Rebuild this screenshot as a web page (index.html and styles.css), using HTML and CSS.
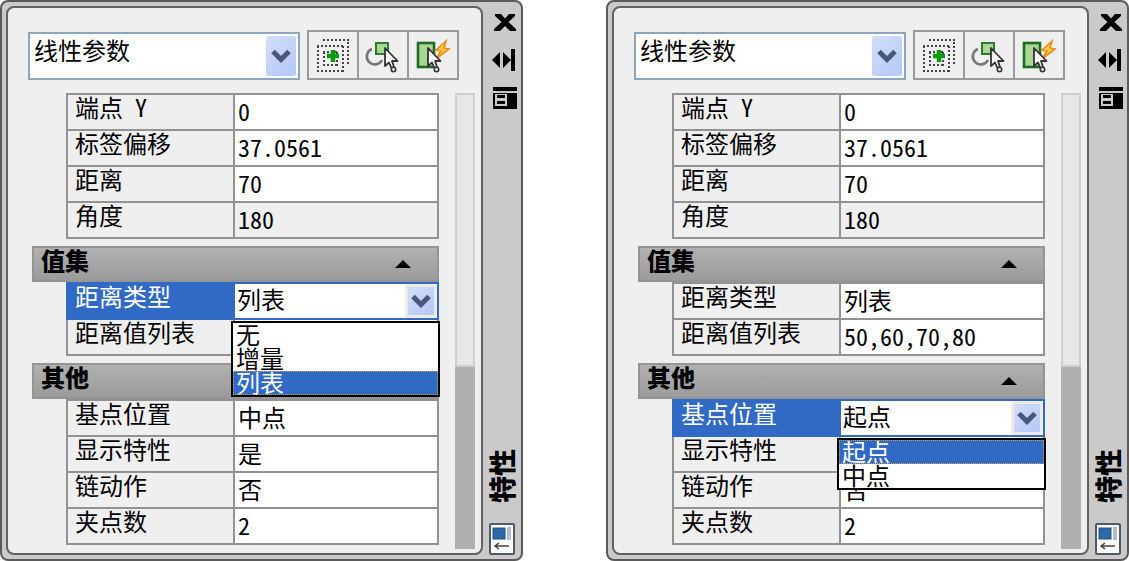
FILE: index.html
```
<!DOCTYPE html>
<html lang="zh-CN">
<head>
    <meta charset="UTF-8">
    <meta name="viewport" content="width=device-width, initial-scale=1.0">
    <title>特性</title>
    <link rel="stylesheet" href="styles.css">
</head>
<body>
    <!-- 共用图标 -->
    <svg class="sprite" aria-hidden="true">
        <symbol id="i-chevron" viewBox="0 0 20 14">
            <path d="M2 2.500l8 8 8-8" fill="none" stroke="#47587c" stroke-width="5"/>
        </symbol>
        <symbol id="i-pickadd" viewBox="0 0 40 40">
            <path d="M10 5H36M35 7V31M4 11H31M4 36H31M5 11V37M30 11V37M10 17H25M10 30H25M11 17V31M24 17V31" fill="none" stroke="#444" stroke-width="2" stroke-dasharray="2 2"/>
            <path d="M14 21H26M20 15V27" stroke="#0c9a14" stroke-width="4.500"/>
        </symbol>
        <symbol id="i-cursor" viewBox="0 0 15 26">
            <path d="M1 1V19L5 15.500L7.500 21L10 20L8 14H13.500Z" fill="#fff" stroke="#333" stroke-width="1.800" stroke-linejoin="round"/>
            <circle cx="9.500" cy="22.500" r="2.200" fill="#fff" stroke="#333" stroke-width="1.600"/>
        </symbol>
        <symbol id="i-select" viewBox="0 0 40 40">
            <path d="M9 14A8 8 0 1 0 19 25" fill="none" stroke="#777" stroke-width="2.600"/>
            <rect x="13" y="8" width="12" height="11" fill="#a9d794" stroke="#2f7a31" stroke-width="2"/>
            <use href="#i-cursor" x="21" y="12" width="15" height="26"/>
        </symbol>
        <symbol id="i-quick" viewBox="0 0 40 40">
            <rect x="5" y="8" width="16" height="24" fill="#a9d794" stroke="#1f6b25" stroke-width="2.600"/>
            <path d="M33 6L23 15L28 16L23 24L36 14L31 13Z" fill="#ffc94a" stroke="#ee8a18" stroke-width="1.600"/>
            <use href="#i-cursor" x="14" y="12" width="15" height="26"/>
        </symbol>
        <symbol id="i-close" viewBox="0 0 24 24">
            <path d="M2 4H8L12 8.500L16 4H22V6L15.500 12L23 19V21H17L12 16L7 21H1V19L8.500 12L2 6Z"/>
        </symbol>
        <symbol id="i-autohide" viewBox="0 0 26 24">
            <path d="M0 12L8 4V20ZM11 4L19 12L11 20ZM19 1H23V23H19Z"/>
        </symbol>
        <symbol id="i-menu" viewBox="0 0 24 24">
            <path d="M0 1H24V5H0ZM0 7H24V23H0Z"/>
            <path d="M2 8H14V20H2Z" fill="#c9c9c9"/>
            <path d="M4 9H12V12H4ZM4 15H12V18H4Z"/>
        </symbol>
        <symbol id="i-palette" viewBox="0 0 26 32">
            <rect x="1" y="1" width="24" height="30" rx="1" fill="#fff" stroke="#4d5c68" stroke-width="2"/>
            <rect x="4" y="5" width="12" height="11" fill="#2f68a6" stroke="#234e80"/>
            <rect x="18" y="4" width="4" height="13" fill="#b6bbc8"/>
            <path d="M6 23H20M10 20L6 23L10 26" fill="none" stroke="#444" stroke-width="1.500"/>
        </symbol>
    </svg>

    <section class="palette" aria-label="特性">
        <div class="panel">
            <div class="toolbar">
                <div class="combo">
                    <select aria-label="对象类型">
                        <option>线性参数</option>
                    </select>
                    <span class="arrow"><svg><use href="#i-chevron"/></svg></span>
                </div>
                <div class="tools">
                    <button type="button" aria-label="切换 PICKADD"><svg><use href="#i-pickadd"/></svg></button>
                    <button type="button" aria-label="选择对象"><svg><use href="#i-select"/></svg></button>
                    <button type="button" aria-label="快速选择"><svg><use href="#i-quick"/></svg></button>
                </div>
            </div>
            <div class="content">
                <div class="groups">
                    <table>
                        <tr><th>端点 Y</th><td>0</td></tr>
                        <tr><th>标签偏移</th><td>37.0561</td></tr>
                        <tr><th>距离</th><td>70</td></tr>
                        <tr><th>角度</th><td class="readonly">180</td></tr>
                    </table>
                    <button type="button" class="group-title">值集<span class="up"></span></button>
                    <table>
                        <tr class="active">
                            <th><label for="distType">距离类型</label></th>
                            <td>
                                <div class="cell-combo">
                                    <select id="distType">
                                        <option>无</option>
                                        <option>增量</option>
                                        <option selected>列表</option>
                                    </select>
                                    <span class="arrow"><svg><use href="#i-chevron"/></svg></span>
                                </div>
                                <ul class="dropdown" role="listbox" aria-label="距离类型">
                                    <li role="option">无</li>
                                    <li role="option">增量</li>
                                    <li role="option" class="selected" aria-selected="true">列表</li>
                                </ul>
                            </td>
                        </tr>
                        <tr><th>距离值列表</th><td></td></tr>
                    </table>
                    <button type="button" class="group-title">其他<span class="up"></span></button>
                    <table>
                        <tr><th>基点位置</th><td>中点</td></tr>
                        <tr><th>显示特性</th><td>是</td></tr>
                        <tr><th>链动作</th><td>否</td></tr>
                        <tr><th>夹点数</th><td>2</td></tr>
                    </table>
                </div>
                <div class="scrollbar"><div class="thumb"></div></div>
            </div>
        </div>
        <div class="strip">
            <button type="button" aria-label="关闭"><svg><use href="#i-close"/></svg></button>
            <button type="button" aria-label="自动隐藏"><svg><use href="#i-autohide"/></svg></button>
            <button type="button" aria-label="菜单"><svg><use href="#i-menu"/></svg></button>
            <span class="title">特性</span>
            <svg class="logo"><use href="#i-palette"/></svg>
        </div>
    </section>

    <section class="palette" aria-label="特性">
        <div class="panel">
            <div class="toolbar">
                <div class="combo">
                    <select aria-label="对象类型">
                        <option>线性参数</option>
                    </select>
                    <span class="arrow"><svg><use href="#i-chevron"/></svg></span>
                </div>
                <div class="tools">
                    <button type="button" aria-label="切换 PICKADD"><svg><use href="#i-pickadd"/></svg></button>
                    <button type="button" aria-label="选择对象"><svg><use href="#i-select"/></svg></button>
                    <button type="button" aria-label="快速选择"><svg><use href="#i-quick"/></svg></button>
                </div>
            </div>
            <div class="content">
                <div class="groups">
                    <table>
                        <tr><th>端点 Y</th><td>0</td></tr>
                        <tr><th>标签偏移</th><td>37.0561</td></tr>
                        <tr><th>距离</th><td>70</td></tr>
                        <tr><th>角度</th><td class="readonly">180</td></tr>
                    </table>
                    <button type="button" class="group-title">值集<span class="up"></span></button>
                    <table>
                        <tr><th>距离类型</th><td>列表</td></tr>
                        <tr><th>距离值列表</th><td>50,60,70,80</td></tr>
                    </table>
                    <button type="button" class="group-title">其他<span class="up"></span></button>
                    <table>
                        <tr class="active">
                            <th><label for="basePos">基点位置</label></th>
                            <td>
                                <div class="cell-combo">
                                    <select id="basePos">
                                        <option selected>起点</option>
                                        <option>中点</option>
                                    </select>
                                    <span class="arrow"><svg><use href="#i-chevron"/></svg></span>
                                </div>
                                <ul class="dropdown" role="listbox" aria-label="基点位置">
                                    <li role="option" class="selected" aria-selected="true">起点</li>
                                    <li role="option">中点</li>
                                </ul>
                            </td>
                        </tr>
                        <tr><th>显示特性</th><td></td></tr>
                        <tr><th>链动作</th><td>否</td></tr>
                        <tr><th>夹点数</th><td>2</td></tr>
                    </table>
                </div>
                <div class="scrollbar"><div class="thumb"></div></div>
            </div>
        </div>
        <div class="strip">
            <button type="button" aria-label="关闭"><svg><use href="#i-close"/></svg></button>
            <button type="button" aria-label="自动隐藏"><svg><use href="#i-autohide"/></svg></button>
            <button type="button" aria-label="菜单"><svg><use href="#i-menu"/></svg></button>
            <span class="title">特性</span>
            <svg class="logo"><use href="#i-palette"/></svg>
        </div>
    </section>
</body>
</html>
```
FILE: styles.css
```
* {
    margin: 0;
    padding: 0;
    box-sizing: border-box;
}

body {
    display: flex;
    align-items: flex-start;
    gap: 83px;
    background: #fff;
    color: #000;
    font-family: "Noto Sans CJK SC", sans-serif;
    font-size: 24px;
    line-height: 24px;
    /* 半角数字 */
    font-feature-settings: "hwid";
}

button,
select {
    font: inherit;
    font-feature-settings: inherit;
    color: inherit;
    border: none;
    background: none;
}

svg {
    display: block;
}

.sprite {
    display: none;
}

.palette {
    flex: 1;
    display: flex;
    padding: 4px 0 4px 4px;
    background: #cacaca;
    border: 2px solid #5a5a5a;
    border-radius: 8px;
}

.panel {
    flex: 1;
    min-width: 0;
    background: #efefef;
    border: 2px solid #626262;
    border-radius: 8px;
    padding: 22px 6px 4px 20px;
}

/* 顶部工具栏 */
.toolbar {
    display: flex;
    align-items: flex-end;
    gap: 7px;
    padding-right: 16px;
    margin-bottom: 13px;
}

.combo {
    flex: 1;
    display: flex;
    height: 48px;
    padding: 2px;
    background: #fff;
    border: 2px solid #8ba6c0;
}

.combo select {
    flex: 1;
    appearance: none;
    padding: 0 2px 12px;
}

.arrow {
    display: flex;
    align-items: center;
    justify-content: center;
    width: 30px;
    background: linear-gradient(135deg, #d3defa, #b3c8f5);
    border-radius: 3px;
}

.arrow svg {
    width: 20px;
    height: 14px;
}

.tools {
    display: flex;
    border: 2px solid #9a9a9a;
}

.tools button {
    display: flex;
    align-items: center;
    justify-content: center;
    width: 50px;
    height: 46px;
}

.tools button + button {
    border-left: 2px solid #9a9a9a;
}

.tools button:first-child {
    width: 48px;
}

.tools svg {
    width: 40px;
    height: 40px;
}

.content {
    display: flex;
    gap: 16px;
    padding-left: 4px;
}

.groups {
    flex: 1;
    padding-bottom: 4px;
}

/* 特性表格 */
table {
    width: calc(100% - 34px);
    margin-left: 34px;
    border-collapse: collapse;
    table-layout: fixed;
}

th,
td {
    height: 36px;
    border: 2px solid #929292;
    text-align: left;
    vertical-align: top;
}

th {
    width: 45%;
    padding-left: 7px;
    font-weight: normal;
}

td {
    position: relative;
    padding: 4px 0 0 3px;
    background: #fff;
}

td.readonly {
    background: #efefef;
}

.group-title {
    display: flex;
    justify-content: space-between;
    width: 100%;
    height: 36px;
    margin-top: 7px;
    padding: 0 26px 0 7px;
    background: linear-gradient(#b1b1b1, #9b9b9b);
    border: 2px solid #959595;
    font-weight: 900;
}

.up {
    align-self: center;
    border: 8px solid transparent;
    border-top: none;
    border-bottom: 8px solid #000;
}

.active th,
.active td {
    border-color: #316ac5;
}

.active th {
    background: #316ac5;
    color: #fff;
}

.active td {
    padding: 0;
}

.cell-combo {
    display: flex;
    height: 34px;
}

.cell-combo select {
    flex: 1;
    appearance: none;
    padding: 0 0 4px 2px;
}

.cell-combo .arrow {
    width: 32px;
    border: 3px solid #eeece2;
}

/* 展开的列表 */
.dropdown {
    position: absolute;
    z-index: 1;
    top: 37px;
    left: -4px;
    right: -3px;
    background: #fff;
    border: 2px solid #000;
    list-style: none;
}

.dropdown li {
    height: 24px;
    padding-left: 3px;
    line-height: 22px;
}

.dropdown .selected {
    background: #316ac5;
    color: #fff;
    outline: 1px dotted #c9a25e;
    outline-offset: -1px;
}

.scrollbar {
    width: 20px;
    background: #b0b0b0;
}

.thumb {
    height: 60%;
    background: #e7e7e7;
    border: 2px solid #cfcfcf;
}

/* 右侧标题栏 */
.strip {
    display: flex;
    flex-direction: column;
    align-items: center;
    width: 38px;
    padding-top: 4px;
}

.strip button {
    width: 26px;
    height: 24px;
    margin: 0 0 14px 5px;
}

.strip button svg {
    width: 26px;
    height: 24px;
}

.title {
    margin-top: auto;
    margin-bottom: 20px;
    font-size: 27px;
    line-height: 28px;
    font-weight: 900;
    writing-mode: vertical-rl;
    text-orientation: sideways;
    transform: rotate(180deg);
}

.logo {
    width: 26px;
    height: 32px;
}
```
